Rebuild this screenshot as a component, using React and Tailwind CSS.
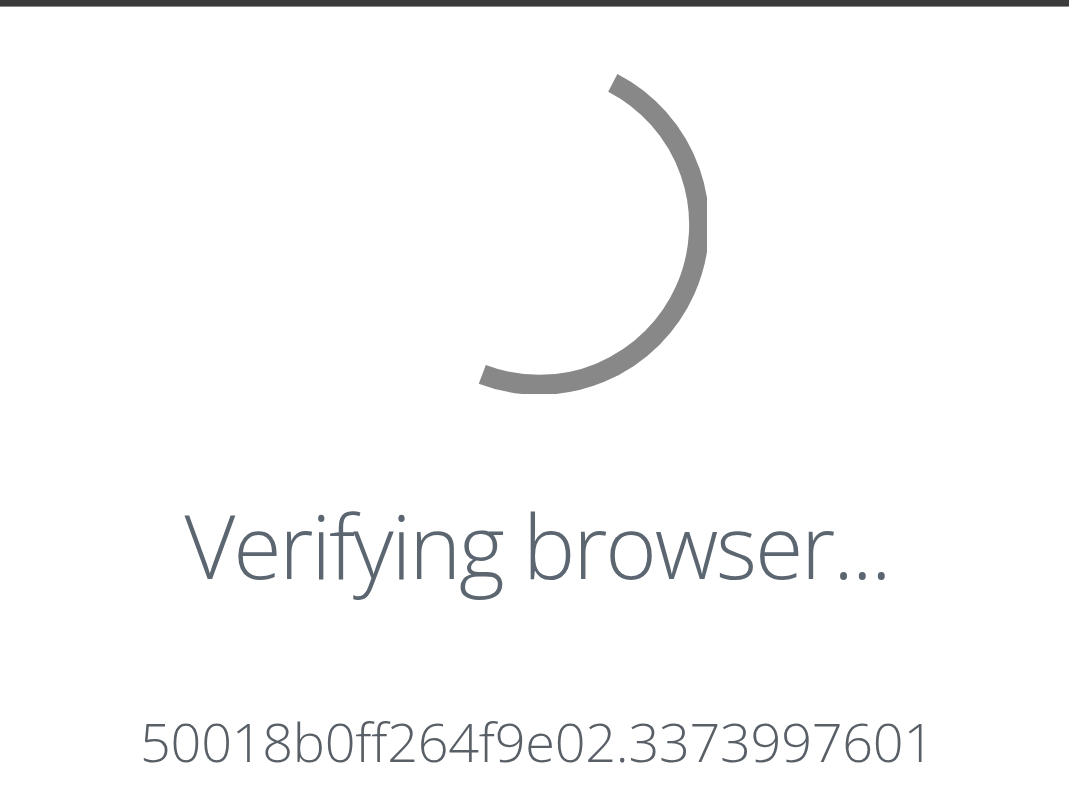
export default function App() {
  return (
    <div className="min-h-[795px] bg-white flex flex-col" style={{ fontFamily: '"Open Sans", "Noto Sans", sans-serif' }}>
      <div className="h-[6px] bg-[#3b3b3b]" />
      <div className="h-px bg-[#8a8a8a]" />
      <div className="flex flex-col items-center pl-[5px]">
        <svg width="340" height="340" viewBox="0 0 340 340" className="mt-[47px]">
          <path
            d="M 245.8 28.8 A 160 160 0 0 1 115.3 320.4"
            fill="none"
            stroke="#888888"
            strokeWidth="20"
          />
        </svg>
        <h1 className="mt-[107px] text-[88px] leading-none font-light tracking-[-0.025em] text-[#5c6670] whitespace-nowrap">
          Verifying browser...
        </h1>
        <p className="mt-[125px] text-[54px] leading-none font-light tracking-[-0.005em] text-[#585f66] whitespace-nowrap">
          50018b0ff264f9e02.3373997601
        </p>
      </div>
    </div>
  );
}
